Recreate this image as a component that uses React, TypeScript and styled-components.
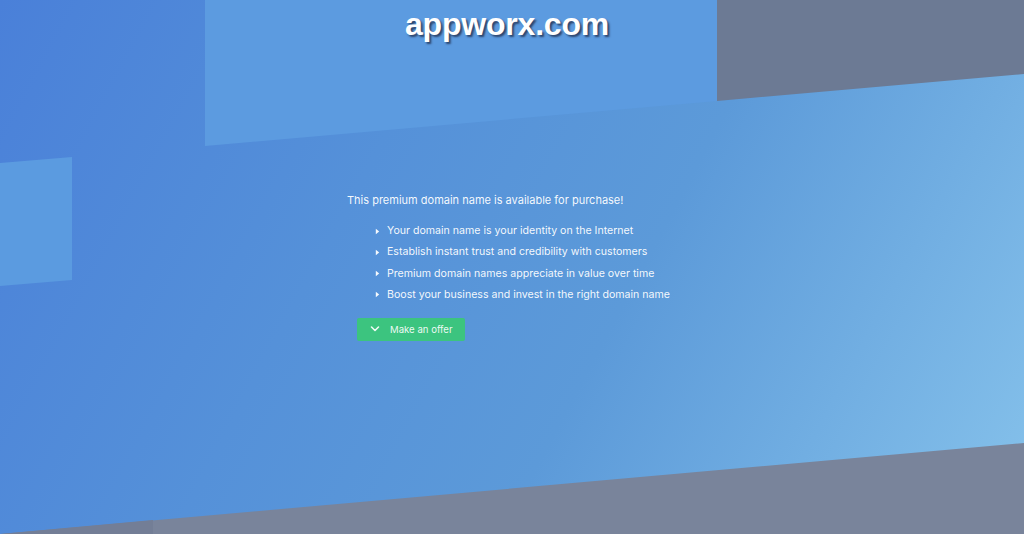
import React from "react";
import styled, { createGlobalStyle } from "styled-components";

const GlobalStyle = createGlobalStyle`
  html, body {
    margin: 0;
    padding: 0;
  }
  body {
    font-family: Inter, "Noto Sans", sans-serif;
    overflow: hidden;
  }
`;

const points = [
  "Your domain name is your identity on the Internet",
  "Establish instant trust and credibility with customers",
  "Premium domain names appreciate in value over time",
  "Boost your business and invest in the right domain name",
];

const App: React.FC = () => {
  return (
    <Page>
      <GlobalStyle />
      {/* decorative slanted shapes */}
      <Shape $color="#6c7a94" $clip="polygon(717px 0, 1024px 0, 1024px 74px, 717px 101px)" />
      <Shape $color="#5c9be0" $clip="polygon(205px 0, 717px 0, 717px 101px, 205px 146px)" />
      <Shape $color="#5b9be0" $clip="polygon(0 163px, 72px 157px, 72px 280px, 0 286px)" />
      <Shape $color="#79849b" $clip="polygon(0 534px, 1024px 443px, 1024px 534px)" />
      <Shape $color="#737e96" $clip="polygon(0 534px, 153px 520px, 153px 534px)" />

      <Header>
        <Logo>appworx.com</Logo>
      </Header>

      <Content>
        <Intro>This premium domain name is available for purchase!</Intro>
        <List>
          {points.map((p) => (
            <Item key={p}>
              <Caret viewBox="0 0 6 8">
                <path d="M1 0.8 L5 4 L1 7.2 Z" fill="currentColor" />
              </Caret>
              {p}
            </Item>
          ))}
        </List>
        <OfferButton>
          <svg width="10" height="10" viewBox="0 0 10 10">
            <path
              d="M1.5 3 L5 6.5 L8.5 3"
              fill="none"
              stroke="currentColor"
              strokeWidth="1.6"
              strokeLinecap="round"
              strokeLinejoin="round"
            />
          </svg>
          Make an offer
        </OfferButton>
      </Content>
    </Page>
  );
};

const Page = styled.div`
  position: relative;
  width: 100%;
  height: 534px;
  overflow: hidden;
  background: linear-gradient(118deg, #4a80d9 0%, #5591d9 35%, #5c9ad9 60%, #86c2eb 100%);
  display: flex;
  flex-direction: column;
  align-items: center;
`;

const Shape = styled.div<{ $color: string; $clip: string }>`
  position: absolute;
  inset: 0;
  background: ${(p) => p.$color};
  clip-path: ${(p) => p.$clip};
`;

const Header = styled.header`
  position: relative;
  z-index: 1;
  padding-top: 6px;
  margin-right: 10px;
`;

const Logo = styled.h1`
  margin: 0;
  font-family: "Liberation Sans", Arial, sans-serif;
  font-weight: 700;
  font-size: 32px;
  line-height: 36px;
  color: #fff;
  letter-spacing: -0.2px;
  text-shadow: 2px 2px 2px rgba(30, 40, 70, 0.75);
`;

const Content = styled.main`
  position: relative;
  z-index: 1;
  width: 330px;
  margin-top: 150px;
  color: rgba(255, 255, 255, 0.95);
  font-size: 11px;
`;

const Intro = styled.p`
  margin: 0 0 15px;
  line-height: 16px;
`;

const List = styled.ul`
  list-style: none;
  margin: 0;
  padding: 0 0 0 28px;
  display: flex;
  flex-direction: column;
  gap: 5.3px;
`;

const Item = styled.li`
  display: flex;
  align-items: center;
  gap: 7px;
  line-height: 16px;
  font-size: 10.6px;
  white-space: nowrap;
`;

const Caret = styled.svg`
  width: 5px;
  height: 7px;
  flex: none;
`;

const OfferButton = styled.button`
  margin: 15px 0 0 10px;
  width: 108px;
  height: 23px;
  display: flex;
  align-items: center;
  gap: 10px;
  padding: 0 0 0 13px;
  border: none;
  border-radius: 2px;
  background: #3cc47f;
  color: rgba(255, 255, 255, 0.92);
  font-family: inherit;
  font-size: 9.6px;
  cursor: pointer;
`;

export default App;
